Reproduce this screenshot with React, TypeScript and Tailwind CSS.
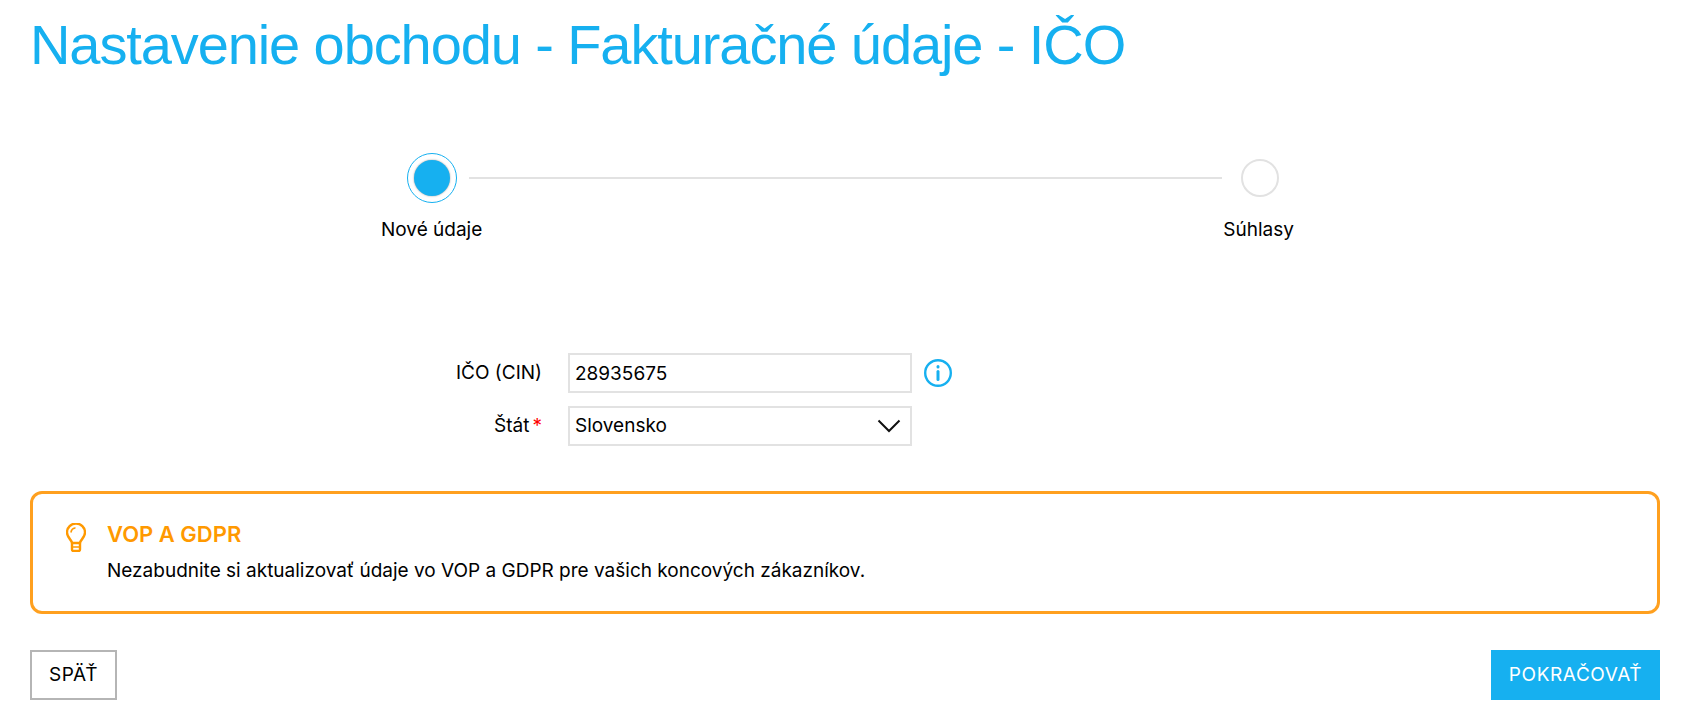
function Bulb() {
  return (
    <svg className="mt-[3px] shrink-0" width="20" height="29" viewBox="0 0 20 29" fill="none" stroke="#ff9900" strokeWidth="2.400" strokeLinecap="round" strokeLinejoin="round">
      <path d="M6 20c0-3-5-5-5-10.500a9 9 0 0 1 18 0C19 15 14 17 14 20Z" />
      <path d="M6 20v6.500c0 1 .5 1.500 1.500 1.500h5c1 0 1.500-.5 1.500-1.500V20" />
      <path d="M6 24h8" strokeWidth="1.500" />
      <path d="M5 9a5 5 0 0 1 4-4" strokeWidth="1.500" />
    </svg>
  );
}

export default function App() {
  return (
    <div className="w-[1693px] h-[715px] overflow-hidden bg-white font-['Inter',sans-serif] text-black pl-[30px] pr-[33px] text-[19px]">
      <h1 className="font-['Liberation_Sans',sans-serif] text-[56px] leading-[72px] text-[#16b0f0] font-normal tracking-[-1.100px] pt-[9px] h-[86px]">Nastavenie obchodu - Fakturačné údaje - IČO</h1>

      <div className="pt-[67px]">
        <div className="flex items-center pl-[377px] pr-[381px]">
          <div className="w-[50px] h-[50px] rounded-full border border-[#16b0f0] flex items-center justify-center shrink-0">
            <div className="w-[36px] h-[36px] rounded-full bg-[#16b0f0] shadow-[0_0_2px_#999999]"></div>
          </div>
          <div className="flex-1 h-[2px] bg-[#e2e2e2] ml-[12px] mr-[19px]"></div>
          <div className="w-[38px] h-[38px] rounded-full border-2 border-[#e2e2e2] shrink-0"></div>
        </div>
        <div className="flex justify-between pl-[351px] pr-[366px] mt-[15px] leading-6">
          <span>Nové údaje</span>
          <span>Súhlasy</span>
        </div>
      </div>

      <div className="mt-[111px] flex flex-col gap-[13px]">
        <div className="flex items-center">
          <label className="w-[512px] text-right">IČO (CIN)</label>
          <input readOnly value="28935675" className="ml-[26px] w-[344px] h-[40px] border-2 border-[#e2e2e2] px-[5px] outline-none" />
          <svg className="ml-[12px]" width="28" height="28" viewBox="0 0 28 28" fill="none" stroke="#16b0f0" strokeWidth="2.400" strokeLinecap="round">
            <circle cx="14" cy="14" r="12.800" />
            <path d="M14 12.500v8" strokeWidth="3" />
            <path d="M14 7.500v.5" strokeWidth="3" />
          </svg>
        </div>
        <div className="flex items-center">
          <label className="w-[512px] text-right">Štát<span className="text-[#ff0000] ml-[3px]">*</span></label>
          <div className="ml-[26px] w-[344px] h-[40px] border-2 border-[#e2e2e2] px-[5px] flex items-center justify-between">
            <span>Slovensko</span>
            <svg className="mr-[4px]" width="24" height="14" viewBox="0 0 24 14" fill="none" stroke="#111111" strokeWidth="2">
              <path d="M1.500 1.500 12 12 22.500 1.500" />
            </svg>
          </div>
        </div>
      </div>

      <div className="mt-[45px] h-[123px] border-[3px] border-[#ffa01f] rounded-[12px] flex pl-[33px] pt-[26px]">
        <Bulb />
        <div className="ml-[21px]">
          <div className="text-[#ff9900] font-semibold text-[22px] leading-7">VOP A GDPR</div>
          <div className="mt-[9px] leading-7">Nezabudnite si aktualizovať údaje vo VOP a GDPR pre vašich koncových zákazníkov.</div>
        </div>
      </div>

      <div className="mt-[36px] flex justify-between tracking-[0.600px]">
        <button className="w-[87px] h-[50px] border-2 border-[#b5b5b5]">SPÄŤ</button>
        <button className="w-[169px] h-[50px] bg-[#16b0f0] text-white">POKRAČOVAŤ</button>
      </div>
    </div>
  );
}
